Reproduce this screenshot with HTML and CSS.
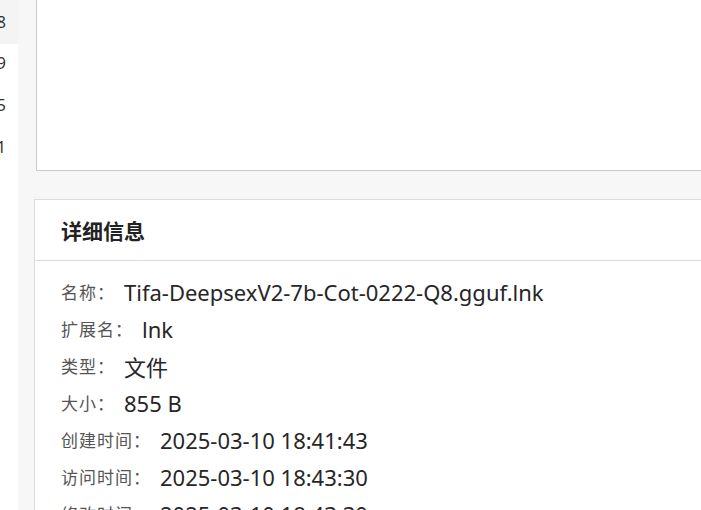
FILE: index.html
```html
<!DOCTYPE html>
<html lang="zh-CN">
<head>
<meta charset="utf-8">
<link rel="stylesheet" href="styles.css">
</head>
<body>
<div class="app">
  <div class="side">
    <div class="side-row active"><span>18</span></div>
    <div class="side-row"><span>19</span></div>
    <div class="side-row"><span>15</span></div>
    <div class="side-row"><span>11</span></div>
  </div>
  <div class="main">
    <div class="preview"></div>
    <div class="card">
      <div class="card-head">详细信息</div>
      <div class="card-body">
        <div class="row"><span class="label">名称：</span><span class="value">Tifa-DeepsexV2-7b-Cot-0222-Q8.gguf.lnk</span></div>
        <div class="row"><span class="label">扩展名：</span><span class="value">lnk</span></div>
        <div class="row"><span class="label">类型：</span><span class="value">文件</span></div>
        <div class="row"><span class="label">大小：</span><span class="value">855 B</span></div>
        <div class="row"><span class="label">创建时间：</span><span class="value">2025-03-10 18:41:43</span></div>
        <div class="row"><span class="label">访问时间：</span><span class="value">2025-03-10 18:43:30</span></div>
        <div class="row"><span class="label">修改时间：</span><span class="value">2025-03-10 18:43:30</span></div>
      </div>
    </div>
  </div>
</div>
</body>
</html>
```
FILE: styles.css
```css
html, body {
  margin: 0;
  padding: 0;
  width: 701px;
  height: 510px;
  overflow: hidden;
  background: #ffffff;
  font-family: "Noto Sans", "Noto Sans CJK SC", sans-serif;
}
.app {
  display: flex;
  height: 510px;
}
.side {
  width: 18px;
  flex: none;
  background: #ffffff;
  overflow: hidden;
}
.side-row {
  height: 42px;
  display: flex;
  align-items: center;
  justify-content: flex-end;
  padding-right: 12px;
  font-size: 16px;
  color: #333333;
  overflow: hidden;
  white-space: nowrap;
}
.side-row.active {
  height: 44px;
  background: #f4f4f4;
  margin-bottom: -2px;
}
.main {
  flex: 1;
  background: #f7f7f7;
  padding-left: 16px;
  overflow: hidden;
}
.preview {
  height: 170px;
  margin-left: 2px;
  width: 700px;
  background: #ffffff;
  border-left: 1px solid #c6cbd2;
  border-bottom: 1px solid #c6cbd2;
}
.card {
  margin-top: 28px;
  width: 720px;
  background: #ffffff;
  border-top: 1px solid #dcdcdc;
  border-left: 1px solid #dcdcdc;
}
.card-head {
  height: 60px;
  display: flex;
  align-items: center;
  padding-left: 26px;
  font-family: "Noto Sans CJK SC", sans-serif;
  font-size: 21px;
  font-weight: bold;
  color: #222222;
  border-bottom: 1px solid #dedede;
}
.card-body {
  padding: 12px 26px 0;
}
.row {
  height: 37px;
  display: flex;
  align-items: center;
  white-space: nowrap;
}
.label {
  font-family: "Noto Sans CJK SC", sans-serif;
  font-size: 17px;
  letter-spacing: 1px;
  color: #555555;
  margin-right: 9px;
}
.value {
  font-size: 22px;
  color: #262626;
}
```
